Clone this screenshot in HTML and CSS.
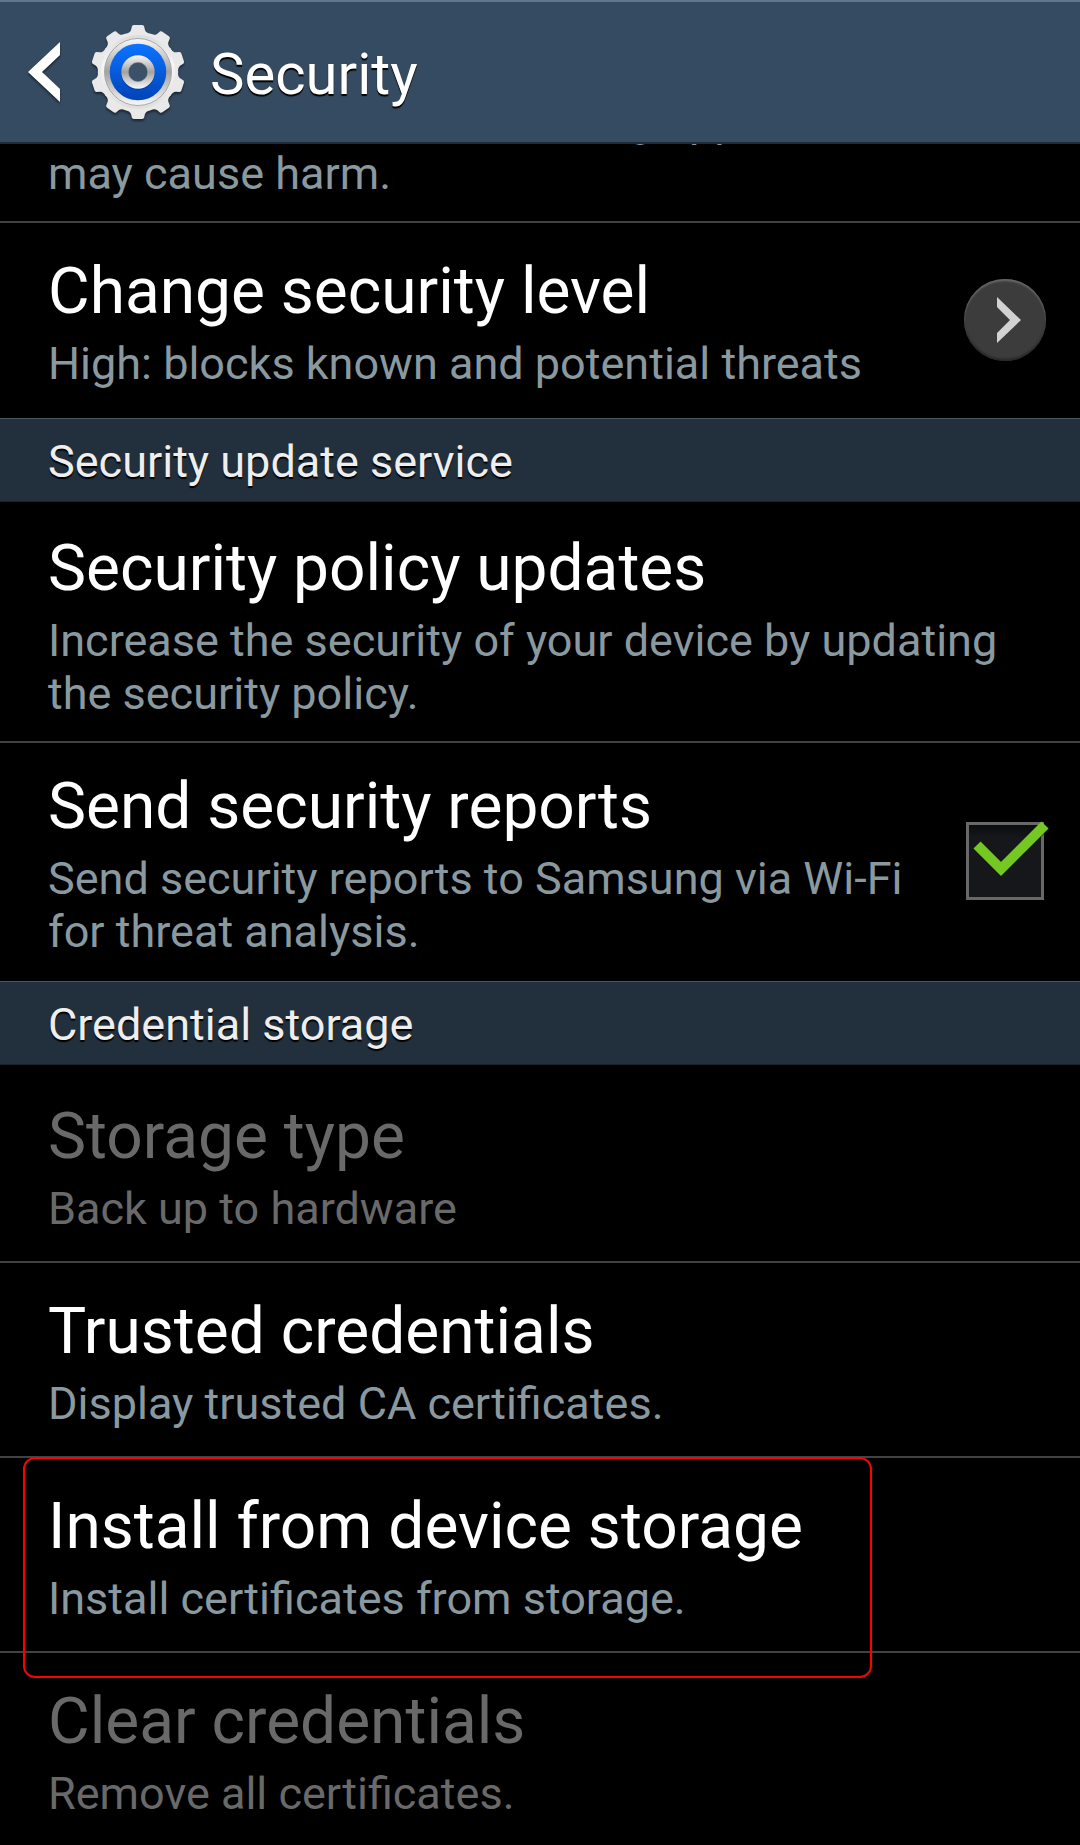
FILE: index.html
```html
<!DOCTYPE html>
<html lang="en">
<head>
<meta charset="utf-8">
<meta name="viewport" content="width=device-width, initial-scale=1">
<title>Security</title>
<link rel="stylesheet" href="styles.css">
</head>
<body>
<header class="bar">
  <button class="back" type="button" aria-label="Back">
    <svg class="back-icon" width="32" height="60" viewBox="0 0 32 60"><path d="M32 0V13L14 30L32 47V60L0 30Z" fill="#fff"/></svg>
    <svg class="gear" width="96" height="96" viewBox="-48 -48 96 96">
      <defs>
        <linearGradient id="metal" x1="0" y1="0" x2="0" y2="1"><stop offset="0" stop-color="#dcdcdc"/><stop offset=".4" stop-color="#f6f6f6"/><stop offset="1" stop-color="#dedede"/></linearGradient>
        <linearGradient id="ring" x1="0" y1="0" x2="0" y2="1"><stop offset="0" stop-color="#f8f8f8"/><stop offset=".5" stop-color="#a2a2a2"/><stop offset="1" stop-color="#f8f8f8"/></linearGradient>
        <linearGradient id="blue" x1="0" y1="0" x2="0" y2="1"><stop offset="0" stop-color="#0c74ff"/><stop offset="1" stop-color="#0043b8"/></linearGradient>
        <path id="tooth" d="M-13 -38Q-8 -39 -7 -42L-6 -46Q-5 -47 -4 -47H4Q5 -47 6 -46L7 -42Q8 -39 13 -38L10 -30H-10Z"/>
      </defs>
      <g fill="#e9e9e9">
        <circle r="40"/>
        <use href="#tooth"/><use href="#tooth" transform="rotate(36)"/><use href="#tooth" transform="rotate(72)"/><use href="#tooth" transform="rotate(108)"/><use href="#tooth" transform="rotate(144)"/><use href="#tooth" transform="rotate(180)"/><use href="#tooth" transform="rotate(216)"/><use href="#tooth" transform="rotate(252)"/><use href="#tooth" transform="rotate(288)"/><use href="#tooth" transform="rotate(324)"/>
      </g>
      <circle r="37" fill="url(#metal)"/>
      <circle r="33.500" fill="url(#ring)" stroke="#a9a9a9"/>
      <circle r="28.300" fill="url(#blue)"/>
      <circle cy="1" r="17" fill="#00389c" opacity=".6"/>
      <circle r="16.700" fill="url(#ring)"/>
      <circle r="9.700" fill="#3a5167" stroke="#9a9a9a" stroke-width=".6"/>
    </svg>
  </button>
  <h1 class="bar-title">Security</h1>
</header>
<main class="list">
  <div class="row row-partial">
    <div class="text"><p class="summary">Block or warn before installing apps that<br>may cause harm.</p></div>
  </div>
  <div class="row">
    <div class="text"><h3 class="title">Change security level</h3><p class="summary">High: blocks known and potential threats</p></div>
    <button class="more" type="button" aria-label="Open security level">
      <svg width="24" height="46" viewBox="0 0 24 46"><path d="M0 0V10L13 23L0 36V46L24 23Z" fill="#d2d2d2"/></svg>
    </button>
  </div>
  <h2 class="section">Security update service</h2>
  <div class="row">
    <div class="text"><h3 class="title">Security policy updates</h3><p class="summary">Increase the security of your device by updating the security policy.</p></div>
  </div>
  <label class="row" for="reports">
    <span class="text"><span class="title">Send security reports</span><span class="summary">Send security reports to Samsung via Wi-Fi for threat analysis.</span></span>
    <span class="check">
      <input class="check-box" type="checkbox" id="reports" checked>
      <svg class="check-mark" width="78" height="78" viewBox="0 0 78 78"><path d="M11 24L35 48L79 4" fill="none" stroke="#101010" stroke-width="10" opacity=".6"/><path d="M11 23L35 47L79 3" fill="none" stroke="#74c821" stroke-width="10"/></svg>
    </span>
  </label>
  <h2 class="section">Credential storage</h2>
  <div class="row row-disabled">
    <div class="text"><h3 class="title">Storage type</h3><p class="summary">Back up to hardware</p></div>
  </div>
  <div class="row">
    <div class="text"><h3 class="title">Trusted credentials</h3><p class="summary">Display trusted CA certificates.</p></div>
  </div>
  <div class="row row-marked">
    <div class="text"><h3 class="title">Install from device storage</h3><p class="summary">Install certificates from storage.</p></div>
  </div>
  <div class="row row-disabled">
    <div class="text"><h3 class="title">Clear credentials</h3><p class="summary">Remove all certificates.</p></div>
  </div>
</main>
</body>
</html>
```
FILE: styles.css
```css
* { box-sizing: border-box; }

body {
  display: flex;
  flex-direction: column;
  height: 100vh;
  margin: 0;
  background: #000;
  color: #fff;
  font-family: Roboto, "Noto Sans", sans-serif;
}

h1, h2, h3, p { margin: 0; font-weight: 400; }

button { padding: 0; border: 0; background: none; cursor: pointer; }

svg { display: block; overflow: visible; }

.bar {
  flex: none;
  display: flex;
  align-items: center;
  gap: 24px;
  height: 144px;
  padding: 0 28px;
  background: #354b61;
  border-top: 2px solid #5f788b;
  border-bottom: 2px solid #1c2c3b;
}

.back { display: flex; align-items: center; gap: 30px; }

.back-icon, .gear { filter: drop-shadow(0 2px 1px rgba(0, 0, 0, .5)); }

.bar-title {
  font-size: 58px;
  line-height: 68px;
  padding-top: 4px;
  text-shadow: 0 2px 1px #000;
}

/* Scrolling list below the action bar */
.list {
  flex: 1;
  min-height: 0;
  overflow-x: hidden;
  overflow-y: auto;
  scrollbar-width: none;
}

.row {
  position: relative;
  display: flex;
  align-items: center;
  gap: 24px;
  min-height: 195px;
  padding: 0 34px 0 48px;
  border-bottom: 2px solid #424242;
}

.row:has(+ .section), .row:last-child { border-bottom-color: transparent; }

.text { flex: 1; padding: 26px 0 21px; }

/* First entry is scrolled partly out of view */
.row-partial { min-height: 0; margin-top: -50px; }

.row-partial .text { padding-top: 0; }

.title, .summary { display: block; }

.title { font-size: 64px; line-height: 75px; }

.summary { font-size: 45px; line-height: 53px; color: #8a999f; }

.title + .summary { margin-top: 8px; }

.row-disabled .title, .row-disabled .summary { color: #696969; }

.section {
  margin-bottom: 3px;
  padding: 16px 48px 13px;
  background: #22303d;
  border-top: 1px solid #4a5863;
  border-bottom: 1px solid #18232d;
  color: #eee;
  font-size: 45px;
  line-height: 53px;
  text-shadow: 0 2px 1px #000;
}

.more {
  display: flex;
  align-items: center;
  justify-content: center;
  width: 82px;
  height: 82px;
  padding-left: 8px;
  border-radius: 50%;
  background: #3c3c3c;
  box-shadow: inset 0 2px 2px #686868, inset 0 -2px 2px #282828;
}

.check { position: relative; width: 78px; height: 78px; margin-right: 2px; }

.check-box {
  appearance: none;
  display: block;
  width: 78px;
  height: 78px;
  margin: 0;
  background: linear-gradient(#0b0c0e, #16171b 12px);
  border: 3px solid #686868;
}

.check-mark { position: absolute; inset: 0; display: none; }

.check-box:checked + .check-mark { display: block; }

/* Outline drawn round the highlighted entry */
.row-marked::after {
  content: "";
  position: absolute;
  z-index: 1;
  inset: -1px 208px -27px 23px;
  border: 2px solid #f00;
  border-radius: 12px;
  pointer-events: none;
}
```
